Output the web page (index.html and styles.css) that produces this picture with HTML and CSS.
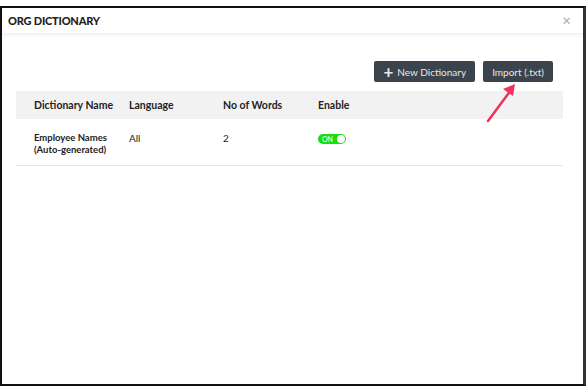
FILE: index.html
```html
<!DOCTYPE html>
<html>
<head>
    <title>Org Dictionary</title>
    <link rel="stylesheet" href="styles.css">
</head>
<body>
    <div class="modal">
        <div class="modal-header">
            <span class="modal-title">ORG DICTIONARY</span>
            <span class="close">&times;</span>
        </div>
        <div class="modal-body">
            <div class="actions">
                <button class="btn"><span class="plus">+</span> New Dictionary</button>
                <button class="btn">Import (.txt)</button>
            </div>
            <table class="dict-table">
                <thead>
                    <tr>
                        <th class="col-name">Dictionary Name</th>
                        <th class="col-lang">Language</th>
                        <th class="col-words">No of Words</th>
                        <th>Enable</th>
                    </tr>
                </thead>
                <tbody>
                    <tr>
                        <td class="name-cell">Employee Names<br>(Auto-generated)</td>
                        <td>All</td>
                        <td>2</td>
                        <td><span class="toggle">ON<span class="knob"></span></span></td>
                    </tr>
                </tbody>
            </table>
            <svg class="arrow" width="40" height="44" viewBox="0 0 40 44">
                <line x1="6" y1="40" x2="29" y2="9" stroke="#f0325f" stroke-width="2.5" stroke-linecap="round"/>
                <polygon points="33,3 21,8 31,15" fill="#f0325f"/>
            </svg>
        </div>
    </div>
</body>
</html>
```

FILE: styles.css
```css
body {
    margin: 0;
    font-family: Lato, "Open Sans", Arial, sans-serif;
    background: #fff;
}
.modal {
    margin-top: 6px;
    width: 581px;
    height: 376px;
    border: 2px solid #111;
    border-right: 3px solid #333;
    background: #fff;
    position: relative;
}
.modal-header {
    display: flex;
    justify-content: space-between;
    align-items: center;
    height: 25px;
    padding: 0 12px 0 6px;
    box-shadow: 0 2px 3px rgba(0, 0, 0, 0.05);
    border-bottom: 1px solid #f2f2f2;
}
.modal-title {
    font-size: 11px;
    font-weight: 900;
    color: #222;
    letter-spacing: -0.2px;
}
.close {
    font-size: 15px;
    color: #aaa;
    line-height: 1;
}
.modal-body {
    padding: 27px 20px 0 14px;
    position: relative;
}
.actions {
    display: flex;
    justify-content: flex-end;
    gap: 8px;
    padding-right: 10px;
    margin-bottom: 9px;
}
.btn {
    background: #3b434c;
    color: #e8e8e8;
    border: none;
    border-radius: 2px;
    font-family: Lato, Arial, sans-serif;
    font-size: 10px;
    height: 21px;
    padding: 0 9px;
    display: flex;
    align-items: center;
}
.plus {
    font-size: 17px;
    font-weight: bold;
    margin-right: 4px;
    line-height: 1;
}
.dict-table {
    width: 100%;
    border-collapse: collapse;
    font-size: 10px;
    color: #222;
}
.dict-table th {
    background: #f2f2f2;
    text-align: left;
    font-weight: bold;
    font-size: 10.5px;
    height: 28px;
    padding: 0;
}
.dict-table th:first-child,
.dict-table td:first-child {
    padding-left: 18px;
}
.col-name { width: 95px; }
.col-lang { width: 94px; }
.col-words { width: 95px; }
.dict-table td {
    vertical-align: top;
    padding: 13px 0 0;
    height: 33px;
    border-bottom: 1px solid #e6e6e6;
    line-height: 12px;
}
.name-cell {
    font-weight: bold;
    font-size: 9.5px;
}
.toggle {
    display: inline-flex;
    align-items: center;
    width: 28px;
    height: 10px;
    border-radius: 6px;
    background: #13e013;
    color: #fff;
    font-size: 7px;
    padding-left: 4px;
    box-sizing: border-box;
    position: relative;
    margin-top: -1px;
}
.knob {
    position: absolute;
    right: 1px;
    top: 1px;
    width: 8px;
    height: 8px;
    border-radius: 50%;
    background: #fff;
}
.arrow {
    position: absolute;
    left: 480px;
    top: 47px;
}
```
